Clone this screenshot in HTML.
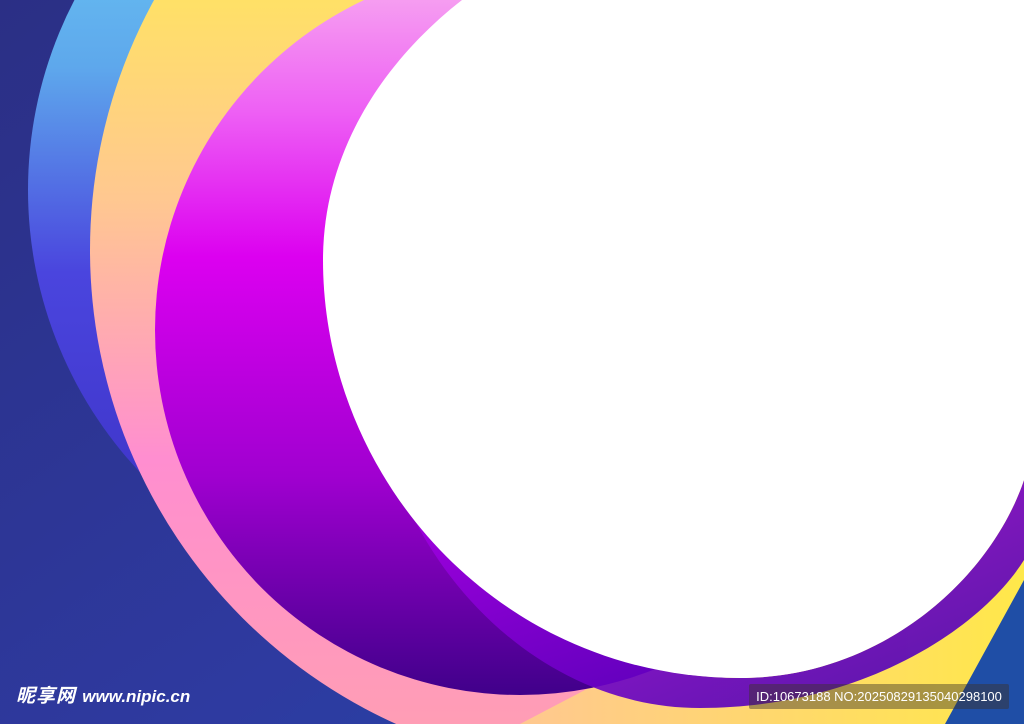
<!DOCTYPE html>
<html><head><meta charset="utf-8"><style>
html,body{margin:0;padding:0;width:1024px;height:724px;overflow:hidden;background:#2a2f8a;position:relative}
svg{position:absolute;left:0;top:0;display:block}
.logo{position:absolute;left:16px;top:686px;height:24px;color:#fff;font-family:"Liberation Sans","Noto Sans CJK SC",sans-serif;font-weight:bold;font-style:italic;font-size:19px;line-height:22px;letter-spacing:1px;white-space:nowrap}
.logo span{font-size:17px;letter-spacing:0}
.id{position:absolute;left:749px;top:684px;width:260px;height:25px;background:rgba(60,50,40,0.45);border-radius:2px;color:#fff;font-family:"Liberation Sans",sans-serif;font-size:13px;line-height:25px;text-align:center}
</style></head><body>
<svg width="1024" height="724" viewBox="0 0 1024 724">
<defs>
<linearGradient id="bg" x1="0" y1="0" x2="1" y2="1"><stop offset="0" stop-color="#2b2f85"/><stop offset="0.6" stop-color="#2e3aa0"/><stop offset="1" stop-color="#1e4aa8"/></linearGradient>
<linearGradient id="cy" x1="0" y1="0" x2="0" y2="1"><stop offset="0" stop-color="#72dcf8"/><stop offset="0.35" stop-color="#5ea8ec"/><stop offset="0.6" stop-color="#4a45de"/><stop offset="1" stop-color="#3a2ec0"/></linearGradient>
<linearGradient id="yl" x1="0" y1="0" x2="0" y2="1"><stop offset="0" stop-color="#fff060"/><stop offset="0.2" stop-color="#ffe85a"/><stop offset="0.45" stop-color="#ffc890"/><stop offset="0.7" stop-color="#ff8ed0"/><stop offset="1" stop-color="#ffa0b0"/></linearGradient>
<linearGradient id="yr" x1="0" y1="0" x2="1" y2="0"><stop offset="0" stop-color="#ffc890"/><stop offset="1" stop-color="#ffe84a"/></linearGradient>
<linearGradient id="mg" x1="0" y1="0" x2="0" y2="1"><stop offset="0" stop-color="#f8b0f0"/><stop offset="0.2" stop-color="#ee60f4"/><stop offset="0.4" stop-color="#dc00f0"/><stop offset="0.7" stop-color="#a000d0"/><stop offset="1" stop-color="#40008a"/></linearGradient>
<linearGradient id="pp" x1="0" y1="0" x2="1" y2="1"><stop offset="0" stop-color="#b000e8"/><stop offset="1" stop-color="#4000b0"/></linearGradient>
</defs>
<rect width="1024" height="724" fill="url(#bg)"/>
<circle cx="440" cy="190" r="412" fill="url(#cy)"/>
<circle cx="610" cy="250" r="520" fill="url(#yl)"/>
<path d="M520 724 L1024 460 L1024 724 Z" fill="url(#yr)"/>
<path d="M945 724 L1024 580 L1024 724 Z" fill="#1f4ea6"/>
<circle cx="520" cy="330" r="365" fill="url(#mg)"/>
<path d="M1024 480 C990 580 880 678 740 678 C580 678 450 580 390 460 C430 590 550 708 700 708 C860 708 980 630 1024 560 Z" fill="url(#pp)" opacity="0.9"/>
<path d="M462 0 C385 60 323 150 323 260 C323 480 500 678 740 678 C880 678 990 580 1024 480 L1024 0 Z" fill="#fff"/>
</svg>
<div class="logo">昵享网 <span>www.nipic.cn</span></div>
<div class="id">ID:10673188 NO:20250829135040298100</div>
</body></html>
